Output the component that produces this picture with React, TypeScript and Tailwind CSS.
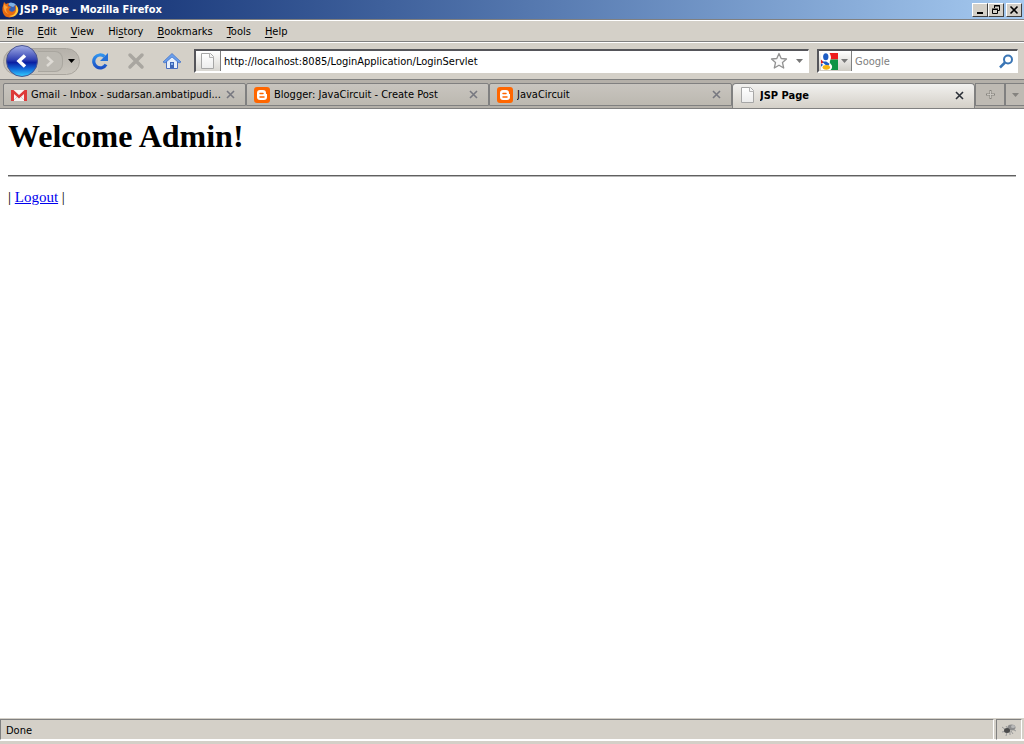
import type { ReactNode } from 'react';

type Tab = {
  title: string;
  icon: ReactNode;
  active?: boolean;
};

const FirefoxIcon = () => (
  <svg width="17" height="17" viewBox="0 0 17 17" aria-hidden="true">
    <circle cx="9" cy="8" r="6.5" fill="#3b5fae" />
    <path d="M6 3c2-2 6-1.500 8 1l-3 2-3-1z" fill="#7fb2e5" />
    <path
      d="M2 1l2 2c1-.6 2-.8 3-.5L6 5l3 1-2 2c0 3 4 4 6 1 1-2 0-4-1-5 4 1 5 5 3 8-2 4-8 6-12 3C0 12 0 7 1 5z"
      fill="#e66a10"
    />
    <path d="M14 4c3 3 3 7 0 10-2 2-5 2-7 1 4 0 7-3 7-6 0-2 0-4 0-5z" fill="#ffc83a" />
    <path d="M2 3l2 2 2 1-2 2c0 2 1 4 3 5-4-1-6-5-5-10z" fill="#f9a13a" />
  </svg>
);

const PageIcon = () => (
  <svg width="16" height="18" viewBox="0 0 16 18" aria-hidden="true">
    <defs>
      <linearGradient id="page" x1="0" y1="0" x2="0" y2="1">
        <stop offset="0" stopColor="#fff" />
        <stop offset="1" stopColor="#ececec" />
      </linearGradient>
    </defs>
    <path d="M1.500 1.500h9l3 3v12h-12z" fill="url(#page)" stroke="#a6a6a6" />
    <path d="M9.500 1.500v4h4" fill="#f4f4f4" stroke="#b4b4b4" />
  </svg>
);

const GmailIcon = () => (
  <svg width="16" height="16" viewBox="0 0 16 16" aria-hidden="true">
    <path d="M0 3h16v11H0z" fill="#f8f4f4" />
    <path d="M3 13l4-4M13 13L9 9" stroke="#d8cccc" />
    <path d="M0 3h2.500L8 8l5.500-5H16v11h-3V7l-5 4.500L3 7v7H0z" fill="#dd3a3a" />
  </svg>
);

const BloggerIcon = () => (
  <svg width="16" height="16" viewBox="0 0 16 16" aria-hidden="true">
    <rect width="16" height="16" rx="3" fill="#ff6600" />
    <path
      d="M6 3h3c2 0 3 1 3 3 0 1 0 1 1 1v3c0 2-1 3-3 3H6c-2 0-3-1-3-3V6c0-2 1-3 3-3z"
      fill="#fff"
    />
    <path d="M6 6.500h3M6 10h4" stroke="#ff6600" strokeWidth="1.500" strokeLinecap="round" />
  </svg>
);

const CloseIcon = ({ color }: { color: string }) => (
  <svg width="9" height="9" viewBox="0 0 9 9" aria-hidden="true">
    <path d="M1 1l7 7M8 1L1 8" stroke={color} strokeWidth="1.600" />
  </svg>
);

const Arrow = ({ color }: { color: string }) => (
  <svg width="7" height="4" viewBox="0 0 7 4" aria-hidden="true">
    <path d="M0 0h7L3.500 4z" fill={color} />
  </svg>
);

const menus = ['File', 'Edit', 'View', 'History', 'Bookmarks', 'Tools', 'Help'];
const accessKeys = [0, 0, 0, 2, 0, 0, 0];

const tabs: Tab[] = [
  { title: 'Gmail - Inbox - sudarsan.ambatipudi...', icon: <GmailIcon /> },
  { title: 'Blogger: JavaCircuit - Create Post', icon: <BloggerIcon /> },
  { title: 'JavaCircuit', icon: <BloggerIcon /> },
  { title: 'JSP Page', icon: <PageIcon />, active: true },
];

const windowButton =
  'flex h-[14px] w-4 items-center justify-center border border-t-white border-l-white border-r-[#404040] border-b-[#404040] bg-[#d4d0c8]';

const TitleBar = () => (
  <header className="flex h-[19px] items-center bg-linear-to-r from-[#0a246a] to-[#a6caf0] pr-[2px] pl-[2px]">
    <FirefoxIcon />
    <h2 className="ml-px flex-1 text-[11px] font-bold text-white">JSP Page - Mozilla Firefox</h2>
    <button type="button" aria-label="Minimize" className={windowButton}>
      <svg width="10" height="10" viewBox="0 0 10 10">
        <path d="M2 7h6v2H2z" />
      </svg>
    </button>
    <button type="button" aria-label="Restore" className={windowButton}>
      <svg width="10" height="10" viewBox="0 0 10 10" fill="none" stroke="#000">
        <path d="M3.500 3V.5h5v5H7M3 1h6M1.500 4.500h5v4h-5zM1 4h6" />
      </svg>
    </button>
    <button type="button" aria-label="Close" className={`ml-[2px] ${windowButton}`}>
      <svg width="10" height="10" viewBox="0 0 10 10">
        <path d="M1.500 1.500l7 7M8.500 1.500l-7 7" stroke="#000" strokeWidth="1.600" />
      </svg>
    </button>
  </header>
);

const MenuBar = () => (
  <nav className="flex h-[23px] items-center gap-[14px] border-t border-b border-[#808080] px-[7px] pt-[2px] shadow-[inset_0_1px_0_#fff]">
    {menus.map((name, i) => (
      <button key={name} type="button">
        {name.slice(0, accessKeys[i])}
        <span className="underline underline-offset-2">{name[accessKeys[i]]}</span>
        {name.slice(accessKeys[i] + 1)}
      </button>
    ))}
  </nav>
);

const boxBorder =
  'border-t-2 border-l-2 border-r border-b-2 border-t-[#55555a] border-l-[#55555a] border-r-white border-b-white';

const Toolbar = () => (
  <div className="flex h-[37px] items-center border-t border-white bg-[#d4d0c8] pr-[6px] pl-[3px]">
    <div className="flex h-[27px] w-[77px] items-center rounded-full border border-[#aaa69f] bg-linear-to-b from-[#b5b1aa] to-[#cac6be]">
      <button type="button" aria-label="Back" className="ml-[2px] shrink-0">
        <svg width="32" height="32" viewBox="0 0 32 32">
          <defs>
            <linearGradient id="back" x1="0" y1="0" x2="0" y2="1">
              <stop offset="0" stopColor="#a3aee6" />
              <stop offset=".45" stopColor="#3444b4" />
              <stop offset=".55" stopColor="#0a1fa2" />
              <stop offset=".75" stopColor="#1268d8" />
              <stop offset="1" stopColor="#35d0ff" />
            </linearGradient>
          </defs>
          <circle cx="16" cy="16" r="15.500" fill="url(#back)" stroke="#4a5591" />
          <path d="M19 10.500L13 16l6 5.500" fill="none" stroke="#fff" strokeWidth="3.500" />
        </svg>
      </button>
      <button
        type="button"
        aria-label="Forward"
        className="flex h-[21px] w-[25px] items-center justify-center rounded-r-lg border border-l-0 border-[#a9a69f] bg-[#bcb9b2]"
      >
        <svg width="10" height="11" viewBox="0 0 10 11">
          <path d="M2 1l5 4.500L2 10" fill="none" stroke="#dedbd5" strokeWidth="2.500" />
        </svg>
      </button>
      <button type="button" aria-label="Recent pages" className="ml-[5px]">
        <Arrow color="#000" />
      </button>
    </div>
    <button type="button" aria-label="Reload" className="ml-[11px]">
      <svg width="18" height="18" viewBox="0 0 18 18">
        <defs>
          <linearGradient id="reload" x1="0" y1="0" x2="0" y2="1">
            <stop offset="0" stopColor="#2f92ee" />
            <stop offset="1" stopColor="#1a4fc4" />
          </linearGradient>
        </defs>
        <path
          d="M13.500 4.500A6.500 6.500 0 1 0 15 12.500"
          fill="none"
          stroke="url(#reload)"
          strokeWidth="3.200"
        />
        <path d="M17 1v8H9z" fill="#2470d8" />
      </svg>
    </button>
    <button type="button" aria-label="Stop" className="ml-[18px]">
      <svg width="18" height="18" viewBox="0 0 18 18">
        <path
          d="M3 3l12 12M15 3L3 15"
          stroke="#a9a6a0"
          strokeWidth="3.500"
          strokeLinecap="round"
        />
      </svg>
    </button>
    <button type="button" aria-label="Home" className="ml-[18px]">
      <svg width="18" height="18" viewBox="0 0 18 18">
        <path d="M3.500 9v7.500h11V9L9 4z" fill="#e8f0fb" stroke="#4a6fc0" />
        <path
          d="M0 10l9-8.500L18 10l-2 1-7-6-7 6z"
          fill="#6a9fec"
          stroke="#3f6fc4"
          strokeWidth=".7"
        />
        <path d="M7 10h4v6H7z" fill="#3c66b8" />
        <path d="M8 11h2v2H8z" fill="#8fb8ee" />
      </svg>
    </button>

    <div className={`ml-[13px] flex h-[24px] min-w-0 flex-1 items-center bg-white ${boxBorder}`}>
      <span className="flex h-full w-[25px] shrink-0 items-center justify-center border-r border-[#808080] bg-linear-to-b from-white to-[#d9d7d2]">
        <PageIcon />
      </span>
      <input
        type="text"
        aria-label="Location"
        defaultValue="http://localhost:8085/LoginApplication/LoginServlet"
        className="min-w-0 flex-1 bg-transparent px-[3px] pt-[2px] outline-none"
      />
      <button type="button" aria-label="Bookmark this page">
        <svg width="18" height="18" viewBox="0 0 18 18">
          <path
            d="M9 1.500l2.200 5 5.300.5-4 3.600 1.200 5.400L9 13.200 4.300 16l1.200-5.400-4-3.600 5.300-.5z"
            fill="#fafafa"
            stroke="#929292"
            strokeWidth="1.300"
            strokeLinejoin="round"
          />
        </svg>
      </button>
      <button type="button" aria-label="Show history" className="mr-[5px] ml-2">
        <Arrow color="#777" />
      </button>
    </div>

    <div className={`ml-2 flex h-[24px] w-[201px] items-center bg-white ${boxBorder}`}>
      <button
        type="button"
        aria-label="Search engine"
        className="flex h-full w-[33px] shrink-0 items-center gap-[3px] border-r border-[#808080] bg-linear-to-b from-white to-[#cfccc6] pl-[2px]"
      >
        <svg width="17" height="17" viewBox="0 0 16 16" className="shrink-0">
          <path d="M0 0h16v16H0z" fill="#fff" />
          <path d="M8 0h8v6H9c1-2 0-4-1-6z" fill="#ee1c1c" />
          <path d="M9 6h7v10H9c2-2 2-4 0-6-1-1-1-2 0-4z" fill="#0c9445" />
          <path d="M0 6l3 3-3 1z" fill="#e8221c" />
          <ellipse cx="4.500" cy="3.500" rx="2.500" ry="3.300" fill="#1c5cc4" />
          <path d="M1 8h4l3 2-1 2-3-1z" fill="#1c5cc4" />
          <path d="M0 10l2 1-2 2z" fill="#1c5cc4" />
          <ellipse cx="5" cy="13.500" rx="3.500" ry="2.300" fill="#f7b512" />
        </svg>
        <Arrow color="#777" />
      </button>
      <input
        type="text"
        aria-label="Search"
        placeholder="Google"
        className="min-w-0 flex-1 bg-transparent px-[3px] pt-[2px] outline-none placeholder:text-[#808080]"
      />
      <button type="button" aria-label="Go" className="mr-[3px]">
        <svg width="15" height="15" viewBox="0 0 15 15">
          <circle cx="9" cy="5.500" r="4" fill="#fff" stroke="#3a75b5" strokeWidth="2" />
          <path d="M6 8.500l-5 5" stroke="#3a75b5" strokeWidth="2.500" />
        </svg>
      </button>
    </div>
  </div>
);

const TabStrip = () => (
  <div className="flex h-[30px] items-stretch border-t border-b border-[#808080] bg-[#b4b0a9] pt-[3px] pl-[3px]">
    {tabs.map(({ title, icon, active }) => (
      <div
        key={title}
        className={
          active
            ? 'flex min-w-0 flex-1 items-center rounded-t border border-b-0 border-[#808080] bg-linear-to-b from-[#f2f1ef] to-[#d4d0c8] pr-[10px] pb-[2px] pl-[7px] font-bold'
            : 'mb-[2px] flex min-w-0 flex-1 items-center rounded-t-xs border border-[#808080] bg-linear-to-b from-[#c8c5bf] to-[#bcb8b0] pr-[10px] pl-[7px]'
        }
      >
        <span className="shrink-0">{icon}</span>
        <button type="button" className="ml-1 min-w-0 flex-1 truncate pt-px text-left">
          {title}
        </button>
        <button type="button" aria-label={`Close ${title}`} className="shrink-0">
          <CloseIcon color={active ? '#2b3038' : '#777880'} />
        </button>
      </div>
    ))}
    <button
      type="button"
      aria-label="New tab"
      className="mb-[2px] flex w-[30px] items-center justify-center border border-[#808080] bg-[#bebab3]"
    >
      <svg width="9" height="9" viewBox="0 0 9 9">
        <path d="M4.500 0v9M0 4.500h9" stroke="#85837f" strokeWidth="2" />
        <path d="M4 1h1v7H4zM1 4h7v1H1z" fill="#c8c5bf" />
      </svg>
    </button>
    <button
      type="button"
      aria-label="List all tabs"
      className="mb-[2px] flex w-[19px] items-center justify-center border border-r-0 border-[#808080] bg-[#bebab3]"
    >
      <Arrow color="#85837f" />
    </button>
  </div>
);

const StatusBar = () => (
  <footer className="flex h-[26px] items-start gap-[2px] bg-[#d4d0c8] pt-px pr-[2px] shadow-[inset_0_-3px_0_#d4d0c8,inset_0_-5px_0_#fff]">
    <p className="flex h-[21px] flex-1 items-center border border-t-[#808080] border-l-[#808080] border-r-white border-b-white px-[5px] pt-[2px]">
      Done
    </p>
    <div className="flex h-[21px] w-[26px] items-center justify-center border border-t-[#808080] border-l-[#808080] border-r-white border-b-white">
      <svg width="16" height="14" viewBox="0 0 16 14" aria-hidden="true">
        <path d="M1 4l4 3M1 9l5-1M5 13l1-4M9 12V8M12 11l-2-3M15 8l-4-2M5 3l2 3" stroke="#999" />
        <ellipse cx="10.500" cy="4.500" rx="4" ry="3" fill="#8d8d8d" />
        <ellipse cx="12" cy="3.500" rx="2" ry="1.500" fill="#b8b8b8" />
        <ellipse cx="6" cy="7.500" rx="3" ry="2.500" fill="#4b4b4b" />
      </svg>
    </div>
  </footer>
);

const App = () => (
  <div className="flex min-h-screen flex-col bg-[#d4d0c8] font-['DejaVu_Sans_Condensed','DejaVu_Sans',sans-serif] text-[11px] leading-[14px] text-black">
    <TitleBar />
    <MenuBar />
    <Toolbar />
    <TabStrip />
    <main className="flex-1 bg-white px-2 pt-[9px] font-['Liberation_Serif',serif] text-[15px] leading-[18px]">
      <h1 className="text-[32px] leading-[37px] font-bold">Welcome Admin!</h1>
      <hr className="mt-[20px] mb-[11px] border-t border-b border-t-[#606060] border-b-[#b8b8b8]" />
      <p>
        |{' '}
        <a href="#logout" className="text-[#0000ee] underline">
          Logout
        </a>{' '}
        |
      </p>
    </main>
    <StatusBar />
  </div>
);

export default App;
